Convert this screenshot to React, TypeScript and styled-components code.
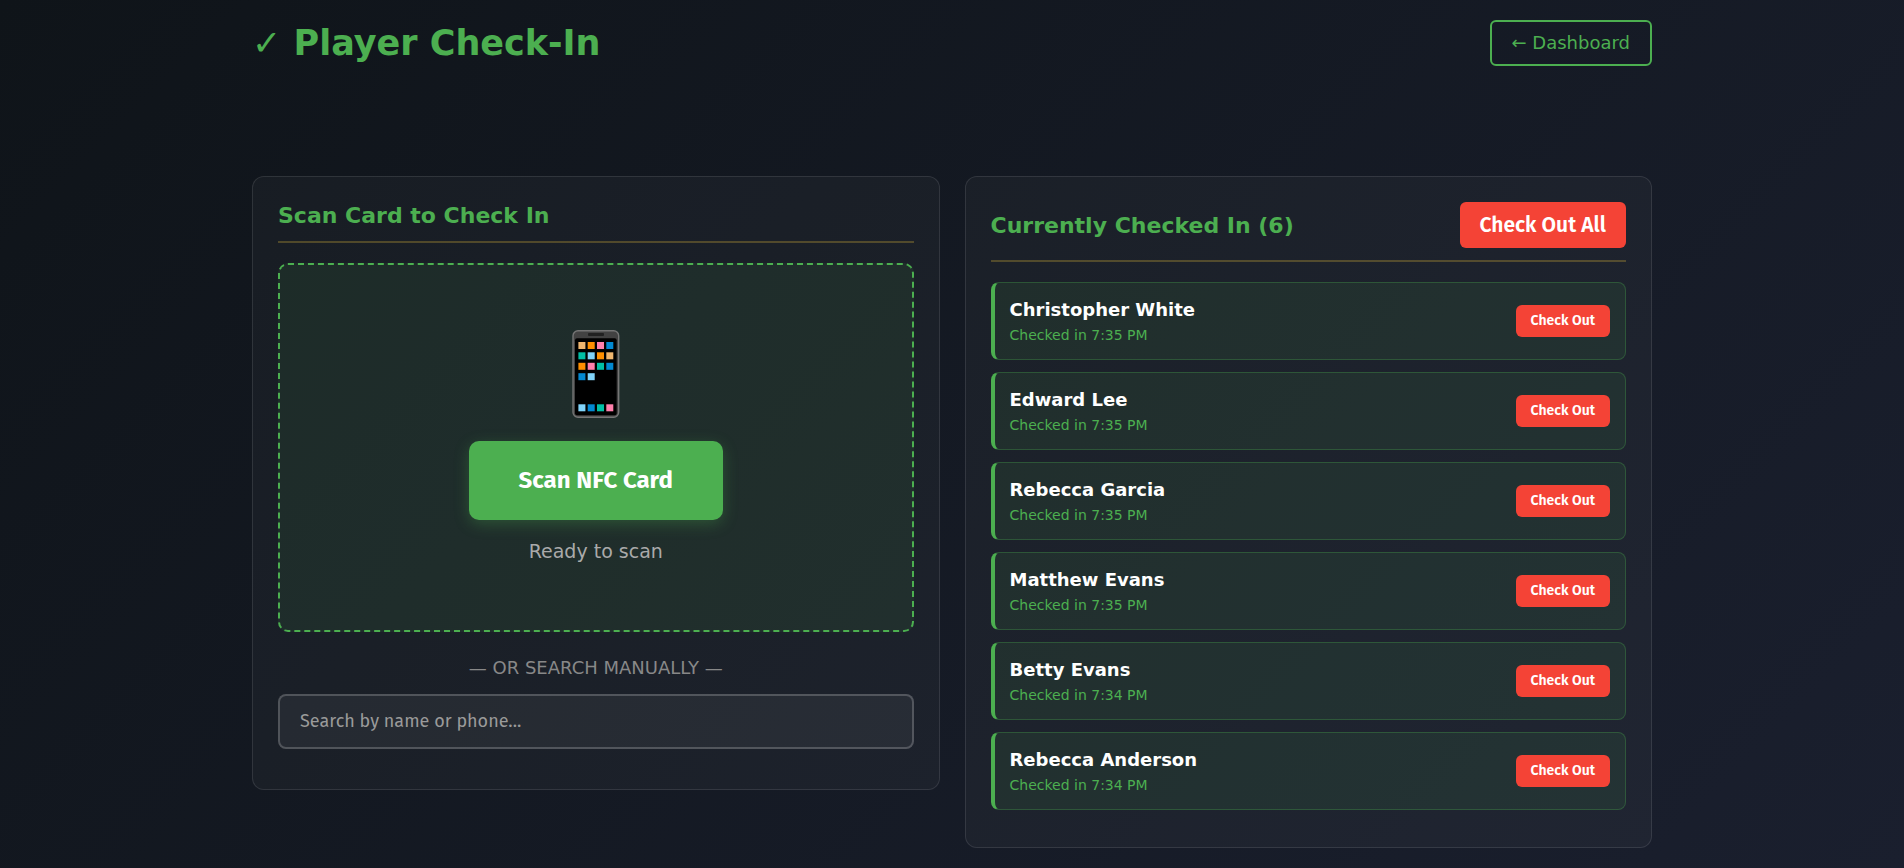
import React, { useState } from "react";
import styled, { createGlobalStyle, css } from "styled-components";

const sans = `"DejaVu Sans", Verdana, sans-serif`;
const controlFont = `"Fira Sans", Roboto, sans-serif`;
const green = "#4caf50";
const red = "#f44336";

const GlobalStyle = createGlobalStyle`
  *, *::before, *::after { box-sizing: border-box; }
  body {
    margin: 0;
    min-height: 100vh;
    background: linear-gradient(135deg, #0f1419 0%, #1a1f2e 100%) no-repeat #0f1419;
    color: #fff;
    font-family: ${sans};
    font-size: 16px;
  }
  h1, h2, p, ul { margin: 0; padding: 0; }
`;

const Page = styled.main`
  max-width: 1440px;
  margin: 0 auto;
  padding: 20px;
`;

const Header = styled.header`
  display: flex;
  align-items: center;
  justify-content: space-between;
  margin-bottom: 110px;
`;

const PageTitle = styled.h1`
  color: ${green};
  font-size: 35px;
  line-height: 42px;
`;

const DashboardLink = styled.a`
  padding: 10px 20px;
  border: 2px solid ${green};
  border-radius: 6px;
  color: ${green};
  font-size: 18px;
  line-height: 22px;
  text-decoration: none;
`;

const Columns = styled.div`
  display: grid;
  grid-template-columns: repeat(2, minmax(0, 1fr));
  align-items: start;
  gap: 25px;
`;

const Card = styled.section`
  padding: 25px;
  border: 1px solid rgba(255, 255, 255, 0.1);
  border-radius: 12px;
  background: rgba(255, 255, 255, 0.03);
`;

const CardHeader = styled.div`
  display: flex;
  align-items: center;
  justify-content: space-between;
  margin-bottom: 20px;
  padding-bottom: 12px;
  border-bottom: 2px solid rgba(212, 175, 55, 0.3);
`;

const CardTitle = styled.h2`
  color: ${green};
  font-size: 22px;
  line-height: 27px;
`;

const ScanArea = styled.div`
  display: flex;
  flex-direction: column;
  align-items: center;
  padding: 60px 20px;
  border: 2px dashed ${green};
  border-radius: 10px;
  background: rgba(76, 175, 80, 0.1);
`;

const PhoneIcon = styled.svg`
  display: block;
  width: 48px;
  height: 90px;
  margin: 5px 0 21px;
`;

const buttonBase = css`
  border: 0;
  color: #fff;
  font-family: ${controlFont};
  cursor: pointer;
`;

const ScanButton = styled.button`
  ${buttonBase}
  padding: 25px 50px;
  border-radius: 10px;
  background: ${green};
  box-shadow: 0 4px 15px rgba(76, 175, 80, 0.3);
  font-size: 24px;
  font-weight: 700;
  line-height: 29px;
`;

const ScanStatus = styled.p`
  min-height: 30px;
  margin-top: 20px;
  color: #aaa;
  font-size: 19px;
  line-height: 23px;
`;

const Divider = styled.p`
  margin: 25px 0 15px;
  color: #888;
  font-size: 18px;
  line-height: 22px;
  text-align: center;
`;

const SearchInput = styled.input`
  display: block;
  width: 100%;
  margin-bottom: 15px;
  padding: 15px 20px;
  border: 2px solid rgba(255, 255, 255, 0.2);
  border-radius: 8px;
  outline: 0;
  background: rgba(255, 255, 255, 0.05);
  color: #fff;
  font-family: ${controlFont};
  font-size: 18px;
  line-height: 21px;

  &::placeholder { color: #9a9a9a; }
`;

const DangerButton = styled.button<{ $large?: boolean }>`
  ${buttonBase}
  padding: ${({ $large }) => ($large ? "12px 20px" : "8px 15px")};
  border-radius: 6px;
  background: ${red};
  font-size: ${({ $large }) => ($large ? "21px" : "14px")};
  font-weight: 600;
  line-height: ${({ $large }) => ($large ? "22px" : "16px")};
`;

const PlayerList = styled.ul`
  list-style: none;
`;

const PlayerRow = styled.li`
  display: flex;
  align-items: center;
  justify-content: space-between;
  margin-bottom: 12px;
  padding: 15px;
  border: 1px solid rgba(76, 175, 80, 0.3);
  border-left: 4px solid ${green};
  border-radius: 8px;
  background: rgba(76, 175, 80, 0.1);
`;

const PlayerName = styled.p`
  margin-bottom: 5px;
  font-size: 18px;
  font-weight: 700;
  line-height: 24px;
`;

const PlayerTime = styled.p`
  color: ${green};
  font-size: 14px;
  line-height: 17px;
`;

const initialPlayers = [
  { name: "Christopher White", time: "7:35 PM" },
  { name: "Edward Lee", time: "7:35 PM" },
  { name: "Rebecca Garcia", time: "7:35 PM" },
  { name: "Matthew Evans", time: "7:35 PM" },
  { name: "Betty Evans", time: "7:34 PM" },
  { name: "Rebecca Anderson", time: "7:34 PM" },
];

const tan = "#f0b66f";
const orange = "#ff8f00";
const pink = "#ff80ab";
const blue = "#0288d1";
const teal = "#00bfa5";
const sky = "#81d4fa";

const appRows = [
  { y: 12, colors: [tan, orange, pink, blue] },
  { y: 22.3, colors: [teal, sky, orange, tan] },
  { y: 32.8, colors: [orange, pink, teal, blue] },
  { y: 43.2, colors: [blue, sky] },
  { y: 74.3, colors: [sky, blue, teal, pink] },
];

function Phone() {
  return (
    <PhoneIcon viewBox="0 0 48 90" aria-hidden="true">
      <rect x="1" y="0.7" width="45.7" height="86.5" rx="5" fill="#424242" stroke="#757575" strokeWidth="1.4" />
      <rect x="3" y="8.3" width="41.7" height="77" rx="2" fill="#000" />
      <rect x="16" y="3" width="16" height="3" rx="1" fill="#212121" />
      {appRows.map(({ y, colors }) =>
        colors.map((color, i) => (
          <rect key={`${y}-${i}`} x={6.4 + i * 9.3} y={y} width="7" height="7" fill={color} />
        ))
      )}
    </PhoneIcon>
  );
}

export default function App() {
  const [players, setPlayers] = useState(initialPlayers);
  const [query, setQuery] = useState("");

  return (
    <>
      <GlobalStyle />
      <Page>
        <Header>
          <PageTitle>✓ Player Check-In</PageTitle>
          <DashboardLink href="#dashboard">← Dashboard</DashboardLink>
        </Header>
        <Columns>
          <Card>
            <CardHeader>
              <CardTitle>Scan Card to Check In</CardTitle>
            </CardHeader>
            <ScanArea>
              <Phone />
              <ScanButton type="button">Scan NFC Card</ScanButton>
              <ScanStatus role="status">Ready to scan</ScanStatus>
            </ScanArea>
            <Divider>— OR SEARCH MANUALLY —</Divider>
            <SearchInput
              type="text"
              aria-label="Search by name or phone"
              placeholder="Search by name or phone..."
              value={query}
              onChange={(e) => setQuery(e.target.value)}
            />
          </Card>
          <Card>
            <CardHeader>
              <CardTitle>Currently Checked In ({players.length})</CardTitle>
              <DangerButton type="button" $large onClick={() => setPlayers([])}>
                Check Out All
              </DangerButton>
            </CardHeader>
            <PlayerList>
              {players.map((player) => (
                <PlayerRow key={player.name}>
                  <div>
                    <PlayerName>{player.name}</PlayerName>
                    <PlayerTime>Checked in {player.time}</PlayerTime>
                  </div>
                  <DangerButton
                    type="button"
                    onClick={() => setPlayers(players.filter((p) => p !== player))}
                  >
                    Check Out
                  </DangerButton>
                </PlayerRow>
              ))}
            </PlayerList>
          </Card>
        </Columns>
      </Page>
    </>
  );
}
